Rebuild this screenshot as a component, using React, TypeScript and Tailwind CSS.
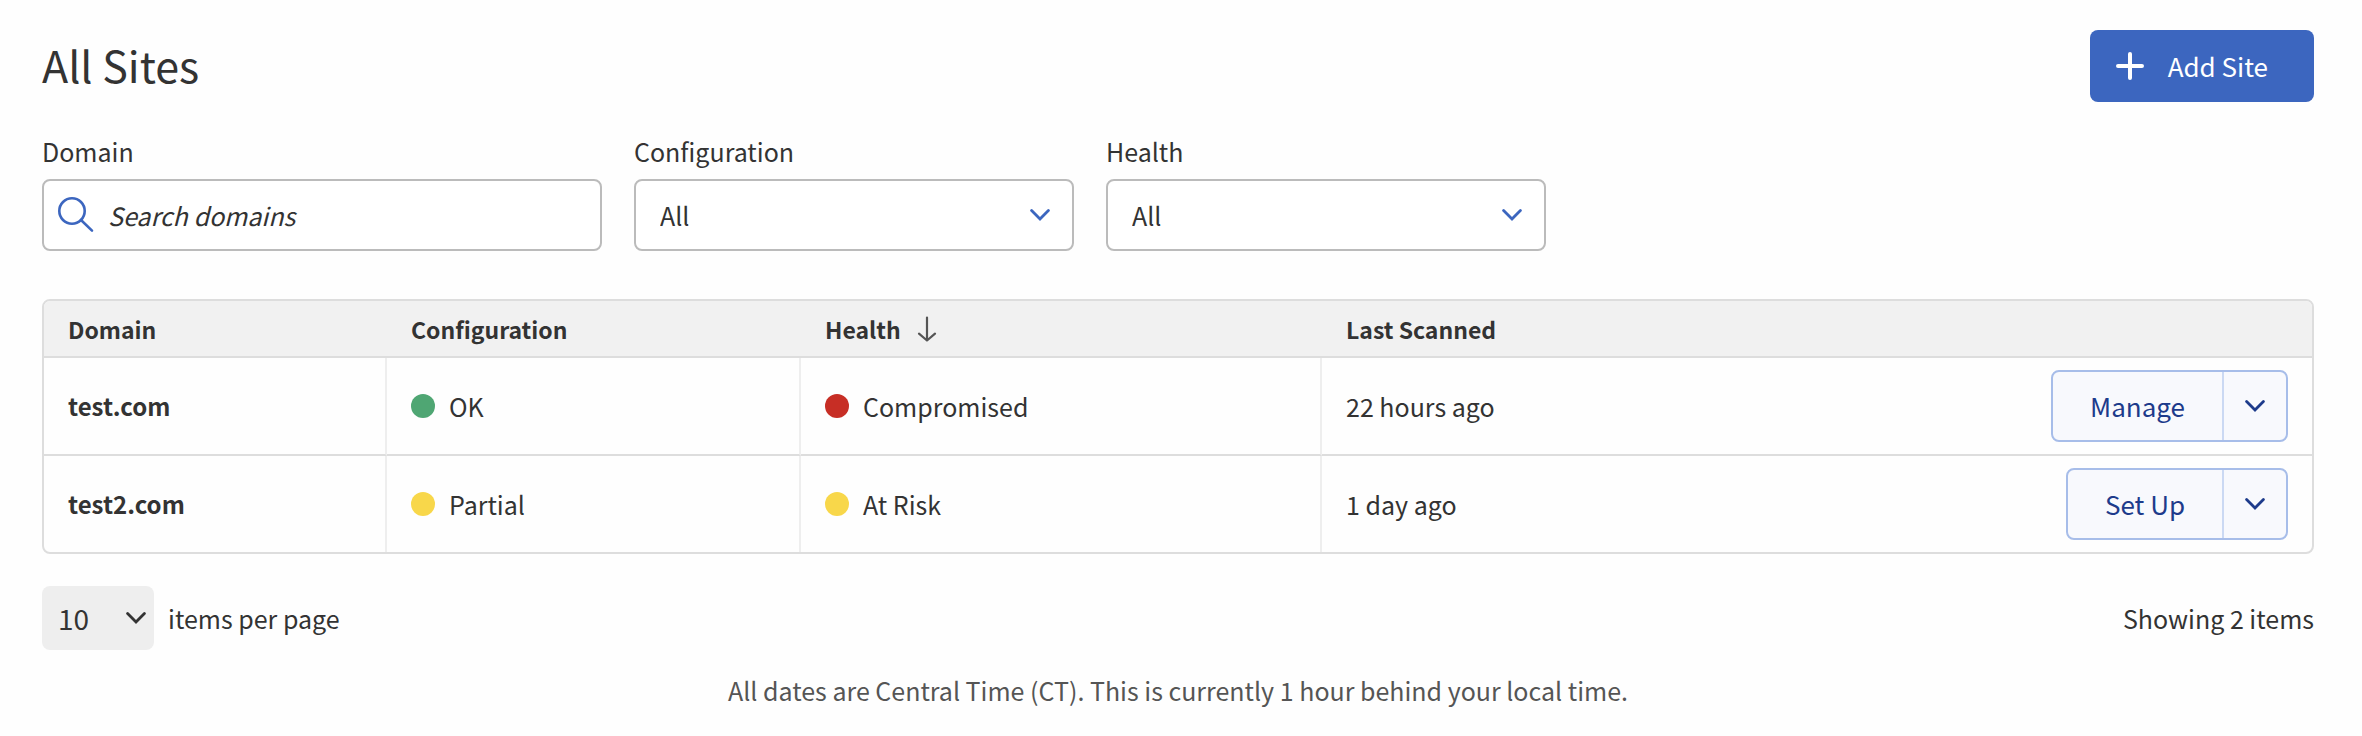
import React, { useState } from "react";

type Status = {
  label: string;
  dot: string;
};

type Site = {
  domain: string;
  configuration: Status;
  health: Status;
  lastScanned: string;
  action: string;
};

type FilterSelectProps = {
  id: string;
  label: string;
  options: string[];
};

const sites: Site[] = [
  {
    domain: "test.com",
    configuration: { label: "OK", dot: "bg-[#4fa673]" },
    health: { label: "Compromised", dot: "bg-[#c72e25]" },
    lastScanned: "22 hours ago",
    action: "Manage",
  },
  {
    domain: "test2.com",
    configuration: { label: "Partial", dot: "bg-[#f8d74a]" },
    health: { label: "At Risk", dot: "bg-[#f8d74a]" },
    lastScanned: "1 day ago",
    action: "Set Up",
  },
];

const Chevron = ({ className = "" }: { className?: string }) => (
  <svg
    viewBox="0 0 20 12"
    className={`w-5 h-3 ${className}`}
    fill="none"
    stroke="currentColor"
    strokeWidth="2.8"
    strokeLinecap="round"
    aria-hidden="true"
  >
    <path d="M1.6 1.6 10 10l8.4-8.4" />
  </svg>
);

const FilterSelect = ({ id, label, options }: FilterSelectProps) => (
  <div className="flex flex-col gap-2 w-[440px]">
    <label htmlFor={id}>{label}</label>
    <div className="relative">
      <select
        id={id}
        className="appearance-none w-full h-[72px] pl-6 pr-16 bg-white border-2 border-[#bbb] rounded-lg"
      >
        {options.map((option) => (
          <option key={option}>{option}</option>
        ))}
      </select>
      <Chevron className="absolute right-6 top-[30px] text-[#3c66bf] pointer-events-none" />
    </div>
  </div>
);

const StatusCell = ({ label, dot }: Status) => (
  <td className="px-6 border-r-2 border-r-[#eee]">
    <div className="flex items-center gap-[14px]">
      <span className={`w-6 h-6 rounded-full ${dot}`} />
      {label}
    </div>
  </td>
);

// Main action with a menu toggle attached on its right
const SplitButton = ({ label }: { label: string }) => (
  <div className="inline-flex h-[72px] align-middle bg-[#f8f9fd] text-[26px] text-[#1d3b8b] border-2 border-[#a7bde9] rounded-lg">
    <button type="button" className="px-[37px]">
      {label}
    </button>
    <button
      type="button"
      aria-label={`More actions for ${label}`}
      className="flex items-center justify-center w-16 border-l-2 border-[#cbd9f3]"
    >
      <Chevron />
    </button>
  </div>
);

const App = () => {
  const [search, setSearch] = useState("");

  return (
    <main className="bg-[#fefefe] min-h-screen pt-[30px] pl-[42px] pr-12 pb-6 font-['Noto_Sans_CJK_SC','Noto_Sans',sans-serif] text-[25px] leading-10 text-[#333]">
      <header className="flex items-start justify-between">
        <h1 className="text-[43px] leading-[68px]">All Sites</h1>
        <button
          type="button"
          className="flex items-center gap-6 h-[72px] pl-[26px] pr-[46px] bg-[#3c66bf] text-[26px] text-white rounded-lg"
        >
          <svg
            viewBox="0 0 28 28"
            className="w-7 h-7"
            stroke="currentColor"
            strokeWidth="4"
            strokeLinecap="round"
            aria-hidden="true"
          >
            <path d="M14 2v24M2 14h24" />
          </svg>
          Add Site
        </button>
      </header>

      {/* Filters */}
      <div className="flex gap-8 mt-[29px]">
        <div className="flex flex-col gap-2 w-[560px]">
          <label htmlFor="domain">Domain</label>
          <div className="relative">
            <svg
              viewBox="0 0 36 36"
              className="absolute left-4 top-[18px] w-9 h-9 text-[#3c66bf] pointer-events-none"
              fill="none"
              stroke="currentColor"
              strokeWidth="2.6"
              strokeLinecap="round"
              aria-hidden="true"
            >
              <circle cx="14" cy="14" r="12.7" />
              <path d="m23 23 11 10.6" />
            </svg>
            <input
              id="domain"
              type="text"
              value={search}
              placeholder="Search domains"
              onChange={(e) => setSearch(e.target.value)}
              className="w-full h-[72px] pl-16 pr-4 bg-white border-2 border-[#bbb] rounded-lg placeholder:italic placeholder:text-[#333]"
            />
          </div>
        </div>
        <FilterSelect
          id="configuration"
          label="Configuration"
          options={["All", "OK", "Partial"]}
        />
        <FilterSelect
          id="health"
          label="Health"
          options={["All", "Compromised", "At Risk"]}
        />
      </div>

      {/* Sites table */}
      <div className="mt-12 border-2 border-[#ddd] rounded-lg overflow-hidden">
        <table className="w-full table-fixed border-separate border-spacing-0 text-left">
          <colgroup>
            <col className="w-[343px]" />
            <col className="w-[414px]" />
            <col className="w-[521px]" />
            <col />
            <col className="w-[360px]" />
          </colgroup>
          <thead>
            <tr className="h-[57px] bg-[#f1f1f1] text-[23px] *:border-b-2 *:border-[#ddd] *:px-6">
              <th>Domain</th>
              <th>Configuration</th>
              <th>
                <div className="flex items-center gap-4">
                  Health
                  <svg
                    viewBox="0 0 20 26"
                    className="w-5 h-[26px] text-[#555]"
                    fill="none"
                    stroke="currentColor"
                    strokeWidth="2.2"
                    strokeLinecap="round"
                    strokeLinejoin="round"
                    aria-hidden="true"
                  >
                    <path d="M10 1.5v23M2 17.6l8 6.9 8-6.9" />
                  </svg>
                </div>
              </th>
              <th>Last Scanned</th>
              <th aria-label="Actions" />
            </tr>
          </thead>
          <tbody>
            {sites.map((site) => (
              <tr
                key={site.domain}
                className="h-[98px] last:h-24 *:border-b-2 *:border-b-[#ddd] last:*:border-b-0"
              >
                <td className="px-6 text-[24px] font-bold border-r-2 border-r-[#eee]">
                  {site.domain}
                </td>
                <StatusCell {...site.configuration} />
                <StatusCell {...site.health} />
                <td className="px-6">{site.lastScanned}</td>
                <td className="px-6 text-right">
                  <SplitButton label={site.action} />
                </td>
              </tr>
            ))}
          </tbody>
        </table>
      </div>

      {/* Pagination */}
      <div className="flex items-center justify-between mt-8">
        <div className="flex items-center gap-[14px]">
          <div className="relative">
            <select
              id="page-size"
              className="appearance-none w-28 h-16 pl-4 pr-10 bg-[#eee] text-[28px] rounded-lg"
            >
              <option>10</option>
              <option>25</option>
              <option>50</option>
            </select>
            <Chevron className="absolute right-2 top-[26px] pointer-events-none" />
          </div>
          <label htmlFor="page-size">items per page</label>
        </div>
        <p>Showing 2 items</p>
      </div>

      <p className="mt-5 text-center text-[#555]">
        All dates are Central Time (CT). This is currently 1 hour behind your
        local time.
      </p>
    </main>
  );
};

export default App;
